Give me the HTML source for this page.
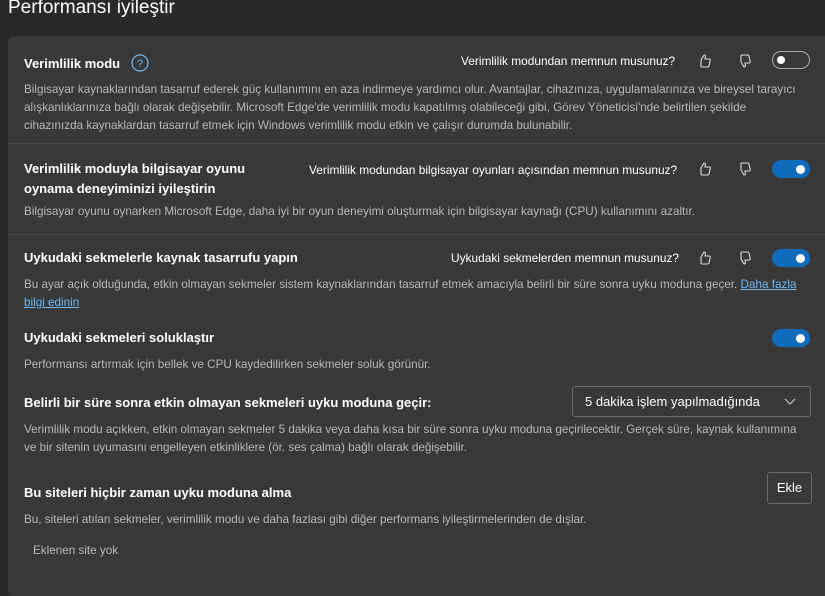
<!DOCTYPE html>
<html><head><meta charset="utf-8"><style>
body{margin:0;width:825px;height:581px;background:#292929;overflow:hidden;font-family:"Liberation Sans",sans-serif;color:#fff;position:relative}
.a{position:absolute;white-space:nowrap}
h1{position:absolute;left:8px;top:-3px;margin:0;font-size:19px;font-weight:normal;color:#fff}
.card{position:absolute;left:8px;top:36px;width:830px;height:560px;background:#383838;border-radius:6px}
.t{font-size:13px;font-weight:bold;color:#fff}
.d{font-size:11.7px;color:#b8b8b8;line-height:18px}
.q{font-size:11.9px;color:#fff}
.hr{position:absolute;left:8px;width:820px;height:1px;background:#4a4a4a}
.tg{position:absolute;width:38px;height:18px;border-radius:10px;box-sizing:border-box}
.off{border:1px solid #aaa}
.off:after{content:"";position:absolute;left:4px;top:4px;width:8px;height:8px;border-radius:50%;background:#fff}
.on{background:#0f6cbd}
.on:after{content:"";position:absolute;right:5px;top:4.5px;width:9px;height:9px;border-radius:50%;background:#fff}
a{color:#6cb8f6;text-decoration:underline}
</style></head><body>
<h1>Performansı iyileştir</h1>
<div class="card"></div>
<svg width="0" height="0" style="position:absolute"><defs>
<g id="up"><path d="M4 7v7M4 7l3-5c1.2 0 1.6 1 1.3 2.2L8 6h4c1 0 1.4.8 1.2 1.5l-1.2 5.4c-.2.7-.7 1.1-1.4 1.1H4" fill="none" stroke="#ddd" stroke-width="1.1"/></g>
<g id="dn"><path d="M4 9V2M4 9l3 5c1.2 0 1.6-1 1.3-2.2L8 10h4c1 0 1.4-.8 1.2-1.5L12 3.1C11.8 2.4 11.3 2 10.6 2H4" fill="none" stroke="#ddd" stroke-width="1.1"/></g>
</defs></svg>

<div class="a t" style="left:24px;top:56px">Verimlilik modu</div>
<svg class="a" style="left:131px;top:54px" width="18" height="18"><circle cx="9" cy="9" r="8" fill="none" stroke="#6cb8f6" stroke-width="1.2"/><text x="9" y="13" font-size="11" fill="#6cb8f6" text-anchor="middle" font-family="Liberation Sans">?</text></svg>
<div class="a q" style="left:461px;top:54px">Verimlilik modundan memnun musunuz?</div>
<svg class="a" style="left:697px;top:53px" width="16" height="16"><use href="#up"/></svg>
<svg class="a" style="left:737px;top:53px" width="16" height="16"><use href="#dn"/></svg>
<div class="tg off" style="left:772px;top:51px"></div>
<div class="a d" style="left:24px;top:81px">Bilgisayar kaynaklarından tasarruf ederek güç kullanımını en aza indirmeye yardımcı olur. Avantajlar, cihazınıza, uygulamalarınıza ve bireysel tarayıcı<br>alışkanlıklarınıza bağlı olarak değişebilir. Microsoft Edge'de verimlilik modu kapatılmış olabileceği gibi, Görev Yöneticisi'nde belirtilen şekilde<br>cihazınızda kaynaklardan tasarruf etmek için Windows verimlilik modu etkin ve çalışır durumda bulunabilir.</div>
<div class="hr" style="top:143px"></div>

<div class="a t" style="left:24px;top:159px;line-height:20px">Verimlilik moduyla bilgisayar oyunu<br>oynama deneyiminizi iyileştirin</div>
<div class="a q" style="left:309px;top:163px">Verimlilik modundan bilgisayar oyunları açısından memnun musunuz?</div>
<svg class="a" style="left:697px;top:161px" width="16" height="16"><use href="#up"/></svg>
<svg class="a" style="left:737px;top:161px" width="16" height="16"><use href="#dn"/></svg>
<div class="tg on" style="left:772px;top:160px"></div>
<div class="a d" style="left:24px;top:203px">Bilgisayar oyunu oynarken Microsoft Edge, daha iyi bir oyun deneyimi oluşturmak için bilgisayar kaynağı (CPU) kullanımını azaltır.</div>
<div class="hr" style="top:234px"></div>

<div class="a t" style="left:24px;top:250px">Uykudaki sekmelerle kaynak tasarrufu yapın</div>
<div class="a q" style="left:451px;top:251px">Uykudaki sekmelerden memnun musunuz?</div>
<svg class="a" style="left:697px;top:250px" width="16" height="16"><use href="#up"/></svg>
<svg class="a" style="left:737px;top:250px" width="16" height="16"><use href="#dn"/></svg>
<div class="tg on" style="left:772px;top:249px"></div>
<div class="a d" style="left:24px;top:276px">Bu ayar açık olduğunda, etkin olmayan sekmeler sistem kaynaklarından tasarruf etmek amacıyla belirli bir süre sonra uyku moduna geçer. <a>Daha fazla</a><br><a>bilgi edinin</a></div>

<div class="a t" style="left:24px;top:330px">Uykudaki sekmeleri soluklaştır</div>
<div class="tg on" style="left:772px;top:329px"></div>
<div class="a d" style="left:24px;top:356px">Performansı artırmak için bellek ve CPU kaydedilirken sekmeler soluk görünür.</div>

<div class="a t" style="left:24px;top:395px">Belirli bir süre sonra etkin olmayan sekmeleri uyku moduna geçir:</div>
<div class="a" style="left:572px;top:386px;width:239px;height:31px;border:1px solid #6a6a6a;border-radius:3px;box-sizing:border-box;font-size:13px;line-height:29px;padding-left:12px">5 dakika işlem yapılmadığında
<svg style="position:absolute;right:14px;top:11px" width="12" height="8"><path d="M1 1l5 5 5-5" fill="none" stroke="#ccc" stroke-width="1.1"/></svg></div>
<div class="a d" style="left:24px;top:421px">Verimlilik modu açıkken, etkin olmayan sekmeler 5 dakika veya daha kısa bir süre sonra uyku moduna geçirilecektir. Gerçek süre, kaynak kullanımına<br>ve bir sitenin uyumasını engelleyen etkinliklere (ör. ses çalma) bağlı olarak değişebilir.</div>

<div class="a t" style="left:24px;top:485px">Bu siteleri hiçbir zaman uyku moduna alma</div>
<div class="a" style="left:767px;top:472px;width:45px;height:32px;border:1px solid #6a6a6a;border-radius:3px;box-sizing:border-box;font-size:13px;line-height:30px;text-align:center">Ekle</div>
<div class="a d" style="left:24px;top:511px">Bu, siteleri atılan sekmeler, verimlilik modu ve daha fazlası gibi diğer performans iyileştirmelerinden de dışlar.</div>
<div class="a d" style="left:33px;top:542px">Eklenen site yok</div>
</body></html>
